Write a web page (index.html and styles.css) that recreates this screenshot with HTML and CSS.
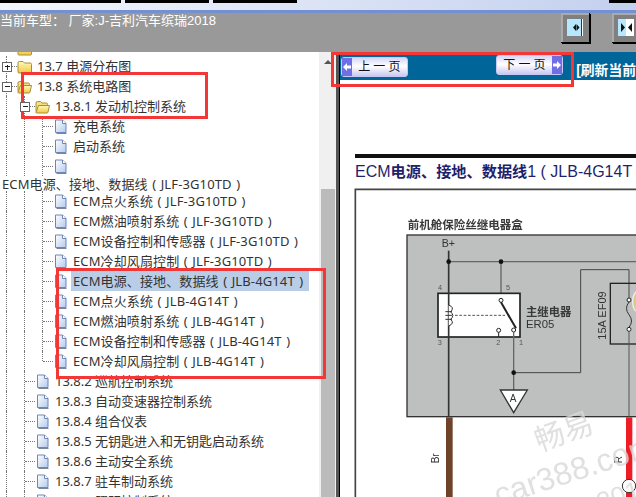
FILE: index.html
```html
<!DOCTYPE html>
<html lang="zh-CN">
<head>
    <meta charset="UTF-8">
    <title>电路图</title>
    <link rel="stylesheet" href="styles.css">
</head>
<body>
    <svg width="0" height="0" class="defs">
        <defs>
            <linearGradient id="foldergrad" x1="0" y1="0" x2="0" y2="1">
                <stop offset="0" stop-color="#fff8c0"/>
                <stop offset="1" stop-color="#f3c93c"/>
            </linearGradient>
            <linearGradient id="docgrad" x1="0" y1="0" x2="1" y2="1">
                <stop offset="0" stop-color="#ffffff"/>
                <stop offset="1" stop-color="#b4caec"/>
            </linearGradient>
            <symbol id="folder" viewBox="0 0 15 14">
                <path d="M1 12.5V3.5Q1 2 2.5 2H6L7.5 3.5H13Q14.5 3.5 14.5 5V12.5Q14.5 13.5 13.5 13.5H2Q1 13.5 1 12.5Z" fill="url(#foldergrad)" stroke="#a88c3c"/>
            </symbol>
            <symbol id="folderopen" viewBox="0 0 15 14">
                <path d="M1 12V3.5Q1 2 2.5 2H5.5L7 3.5H11.5Q12.5 3.5 12.5 5V6" fill="#f6e07a" stroke="#a88c3c"/>
                <path d="M1 13L3.5 6H14.5L13 12.5Q12.8 13.5 12 13.5H2Q1 13.5 1 13Z" fill="url(#foldergrad)" stroke="#a88c3c"/>
            </symbol>
            <symbol id="doc" viewBox="0 0 13 15">
                <path d="M1.5 1H8.5L12 4.5V13.5H1.5Z" fill="url(#docgrad)" stroke="#6f86b5"/>
                <path d="M8.5 1V4.5H12" fill="#fff" stroke="#6f86b5"/>
                <path d="M2.5 14.5H12.5" stroke="#7a84a3"/>
            </symbol>
        </defs>
    </svg>

    <div class="page">
        <div class="topstrip">
            <div class="tabs">
                <span class="tab tab1"></span>
                <span class="tab tab2"></span>
                <span class="tab tab2"></span>
            </div>
            <span class="tab tabend"></span>
        </div>

        <div class="band">
            <div class="cartitle">当前车型： 厂家:J-吉利汽车缤瑞2018</div>
            <div class="framebtns">
                <div class="framebtn">
                    <svg width="16" height="17" viewBox="0 0 16 17"><path d="M9 5L6 8.5L9 12Z M9.5 5L12.5 8.5L9.5 12Z" fill="#111"/><rect x="15" y="0" width="1" height="17" fill="#fff"/><rect x="14" y="0" width="1" height="17" fill="#333"/></svg>
                </div>
                <div class="framebtn">
                    <svg width="16" height="17" viewBox="0 0 16 17"><rect x="8" y="0" width="8" height="17" fill="#fff"/><path d="M3 4V13L7 8.5Z M14 4L10 8.5L14 13Z" fill="#111"/></svg>
                </div>
            </div>
        </div>

        <div class="main">
            <div class="tree">
                <div class="row toppart"><span class="elbow plain"></span><svg class="icon"><use href="#folder"/></svg></div>
                <div class="row"><span class="elbow"><i class="box plus"></i></span><svg class="icon"><use href="#folder"/></svg><span class="label">13.7 电源分布图</span></div>
                <div class="row"><span class="elbow"><i class="box"></i></span><svg class="icon"><use href="#folderopen"/></svg><span class="label">13.8 系统电路图</span></div>
                <div class="row"><span class="guide"></span><span class="elbow"><i class="box"></i></span><svg class="icon"><use href="#folderopen"/></svg><span class="label">13.8.1 发动机控制系统</span></div>
                <div class="row"><span class="guide"></span><span class="guide"></span><span class="elbow"></span><svg class="icon"><use href="#doc"/></svg><span class="label">充电系统</span></div>
                <div class="row"><span class="guide"></span><span class="guide"></span><span class="elbow"></span><svg class="icon"><use href="#doc"/></svg><span class="label">启动系统</span></div>
                <div class="row"><span class="guide"></span><span class="guide"></span><span class="elbow"></span><svg class="icon"><use href="#doc"/></svg></div>
                <div class="row flush"><span class="label ecm">ECM电源、接地、数据线 ( JLF-3G10TD )</span></div>
                <div class="row"><span class="guide"></span><span class="guide"></span><span class="elbow"></span><svg class="icon"><use href="#doc"/></svg><span class="label ecm">ECM点火系统 ( JLF-3G10TD )</span></div>
                <div class="row"><span class="guide"></span><span class="guide"></span><span class="elbow"></span><svg class="icon"><use href="#doc"/></svg><span class="label ecm">ECM燃油喷射系统 ( JLF-3G10TD )</span></div>
                <div class="row"><span class="guide"></span><span class="guide"></span><span class="elbow"></span><svg class="icon"><use href="#doc"/></svg><span class="label ecm">ECM设备控制和传感器 ( JLF-3G10TD )</span></div>
                <div class="row"><span class="guide"></span><span class="guide"></span><span class="elbow"></span><svg class="icon"><use href="#doc"/></svg><span class="label ecm">ECM冷却风扇控制 ( JLF-3G10TD )</span></div>
                <div class="row"><span class="guide"></span><span class="guide"></span><span class="elbow"></span><svg class="icon"><use href="#doc"/></svg><span class="label ecm selected">ECM电源、接地、数据线 ( JLB-4G14T )</span></div>
                <div class="row"><span class="guide"></span><span class="guide"></span><span class="elbow"></span><svg class="icon"><use href="#doc"/></svg><span class="label ecm">ECM点火系统 ( JLB-4G14T )</span></div>
                <div class="row"><span class="guide"></span><span class="guide"></span><span class="elbow"></span><svg class="icon"><use href="#doc"/></svg><span class="label ecm">ECM燃油喷射系统 ( JLB-4G14T )</span></div>
                <div class="row"><span class="guide"></span><span class="guide"></span><span class="elbow"></span><svg class="icon"><use href="#doc"/></svg><span class="label ecm">ECM设备控制和传感器 ( JLB-4G14T )</span></div>
                <div class="row"><span class="guide"></span><span class="guide"></span><span class="elbow last"></span><svg class="icon"><use href="#doc"/></svg><span class="label ecm">ECM冷却风扇控制 ( JLB-4G14T )</span></div>
                <div class="row"><span class="guide"></span><span class="elbow"></span><svg class="icon"><use href="#doc"/></svg><span class="label">13.8.2 巡航控制系统</span></div>
                <div class="row"><span class="guide"></span><span class="elbow"></span><svg class="icon"><use href="#doc"/></svg><span class="label">13.8.3 自动变速器控制系统</span></div>
                <div class="row"><span class="guide"></span><span class="elbow"></span><svg class="icon"><use href="#doc"/></svg><span class="label">13.8.4 组合仪表</span></div>
                <div class="row"><span class="guide"></span><span class="elbow"></span><svg class="icon"><use href="#doc"/></svg><span class="label">13.8.5 无钥匙进入和无钥匙启动系统</span></div>
                <div class="row"><span class="guide"></span><span class="elbow"></span><svg class="icon"><use href="#doc"/></svg><span class="label">13.8.6 主动安全系统</span></div>
                <div class="row"><span class="guide"></span><span class="elbow"></span><svg class="icon"><use href="#doc"/></svg><span class="label">13.8.7 驻车制动系统</span></div>
                <div class="row"><span class="guide"></span><span class="elbow"></span><svg class="icon"><use href="#doc"/></svg><span class="label">13.8.8 照明控制系统</span></div>
            </div>

            <div class="scrollbar">
                <span class="arrowup"></span>
                <div class="thumb"></div>
            </div>
            <div class="splitter"></div>

            <div class="pane">
                <div class="pager">
                    <div class="pagebtn prev">
                        <span class="pagearrow"><svg width="10" height="10" viewBox="0 0 10 10"><path d="M1 5L5 1V3.5H9V6.5H5V9Z" fill="#fff"/></svg></span>
                        <span class="pagetext">上 一 页</span>
                    </div>
                    <div class="pagebtn next">
                        <span class="pagetext">下 一 页</span>
                        <span class="pagearrow"><svg width="10" height="10" viewBox="0 0 10 10"><path d="M9 5L5 1V3.5H1V6.5H5V9Z" fill="#fff"/></svg></span>
                    </div>
                    <span class="refresh">[刷新当前</span>
                </div>
                <div class="docbody">
                    <div class="docrule"></div>
                    <h3 class="doctitle">ECM<b>电源、接地、数据线</b>1 ( JLB-4G14T )</h3>
                    <svg class="diagram" viewBox="0 0 888 921" width="296" height="307">
                        <path d="M46 921V-2H888" fill="none" stroke="#444" stroke-width="5"/>
                        <text x="203" y="118" class="cjkbold" font-size="34.5">前机舱保险丝继电器盒</text>
                        <rect x="201" y="135" width="700" height="545" fill="#bec0c0" stroke="#333" stroke-width="4"/>
                        <text x="305" y="172" font-size="32" fill="#333">B+</text>

                        <path d="M326 215H888M483 215V326" fill="none" stroke="#666" stroke-width="4"/>
                        <rect x="294" y="310" width="246" height="131" fill="#fff" stroke="#222" stroke-width="5"/>
                        <path d="M326 182V680" fill="none" stroke="#333" stroke-width="5"/>
                        <circle cx="326" cy="215" r="7" fill="#111"/>
                        <circle cx="483" cy="215" r="7" fill="#111"/>

                        <path d="M326 345Q345 352 332 366Q345 376 332 388Q345 400 326 408" fill="#fff" stroke="#333" stroke-width="3"/>
                        <path d="M316 365H336M316 376H336M316 388H336" stroke="#333" stroke-width="3"/>
                        <path d="M345 376H495" stroke="#555" stroke-width="3" stroke-dasharray="8 5"/>
                        <path d="M483 337L528 415" stroke="#222" stroke-width="6"/>
                        <circle cx="483" cy="331" r="6" fill="#fff" stroke="#222" stroke-width="3"/>
                        <circle cx="521" cy="420" r="6" fill="#fff" stroke="#222" stroke-width="3"/>
                        <circle cx="476" cy="421" r="6" fill="#fff" stroke="#222" stroke-width="3"/>
                        <path d="M476 427V441" stroke="#222" stroke-width="3"/>
                        <text x="294" y="299" font-size="22" fill="#555">4</text>
                        <text x="498" y="299" font-size="22" fill="#555">5</text>
                        <text x="293" y="466" font-size="22" fill="#555">3</text>
                        <text x="469" y="466" font-size="22" fill="#555">2</text>
                        <text x="537" y="466" font-size="22" fill="#555">1</text>
                        <text x="558" y="377" class="cjkbold" font-size="34">主继电器</text>
                        <text x="558" y="415" font-size="34" fill="#333">ER05</text>

                        <path d="M521 426V600" stroke="#666" stroke-width="4"/>
                        <path d="M521 548H722V239H867V325" fill="none" stroke="#444" stroke-width="3"/>
                        <circle cx="521" cy="548" r="7" fill="#111"/>
                        <path d="M481 600H562L521 668Z" fill="#fff" stroke="#333" stroke-width="4"/>
                        <text x="509" y="636" font-size="30" fill="#333">A</text>

                        <text transform="translate(797 449) rotate(-90)" font-size="33" fill="#333">15A EF09</text>
                        <rect x="811" y="280" width="100" height="182" fill="none" stroke="#222" stroke-width="4"/>
                        <ellipse cx="892" cy="335" rx="14" ry="30" fill="#d9c98a" stroke="#eee" stroke-width="4"/>
                        <path d="M867 336Q852 355 867 374Q882 393 867 412" fill="none" stroke="#333" stroke-width="3"/>
                        <circle cx="867" cy="330" r="6" fill="#fff" stroke="#222" stroke-width="3"/>
                        <circle cx="867" cy="418" r="6" fill="#fff" stroke="#222" stroke-width="3"/>
                        <path d="M867 424V680" stroke="#555" stroke-width="3"/>

                        <rect x="318" y="682" width="20" height="239" fill="#6f432a"/>
                        <rect x="858" y="682" width="19" height="239" fill="#ee1c25"/>
                        <circle cx="867" cy="888" r="20" fill="#fff" stroke="#333" stroke-width="3"/>
                        <text transform="translate(297 820) rotate(-90)" font-size="30" fill="#333">Br</text>
                        <text transform="translate(846 820) rotate(-90)" font-size="30" fill="#333">R</text>

                        <text transform="translate(598 785) rotate(-20)" class="mark" font-size="90">畅易</text>
                        <text transform="translate(475 948) rotate(-18)" class="mark" font-size="96">car388.com</text>
                        <text transform="translate(780 965) rotate(-18)" class="mark" font-size="80">2016</text>
                    </svg>
                </div>
            </div>
        </div>

        <span class="redbox box1"></span>
        <span class="redbox box2"></span>
        <span class="redbox box3"></span>
    </div>
</body>
</html>
```

FILE: styles.css
```css
html, body {
    margin: 0;
    height: 100%;
    overflow: hidden;
    background-color: #fff;
}

.defs {
    position: absolute;
}

.page {
    position: relative;
    width: 636px;
    height: 497px;
    overflow: hidden;
    font-family: "Noto Sans", "Noto Sans CJK SC", sans-serif;
    font-size: 13px;
    color: #333;
}

/* top strip */
.topstrip {
    display: flex;
    justify-content: space-between;
    height: 10px;
    background: linear-gradient(to right, #f4f6fd, #c3d0ee);
    border-bottom: 3px solid #7391d2;
}

.tabs {
    display: flex;
    gap: 4px;
}

.tab {
    display: block;
    height: 3px;
    background-color: #000;
}

.tab1 {
    width: 121px;
}

.tab2 {
    width: 84px;
}

.tabend {
    width: 27px;
}

/* gray band */
.band {
    display: flex;
    justify-content: space-between;
    height: 39px;
    background-color: #999;
    overflow: hidden;
}

.cartitle {
    line-height: 15px;
    font-family: "Liberation Sans", "Noto Sans CJK SC", sans-serif;
    color: #fff;
}

.framebtns {
    display: flex;
    gap: 22px;
    flex-shrink: 0;
    margin-right: -5px;
}

.framebtn {
    width: 16px;
    height: 17px;
    padding: 6px;
    background-color: #808080;
    border-right: 1px solid #000;
    border-bottom: 1px solid #000;
    box-shadow: 1px 1px 0 #000, inset 2px 2px 0 #aaa;
}

.framebtn svg {
    display: block;
    background-color: #b5e8ff;
}

/* main area */
.main {
    display: flex;
    height: 445px;
}

.tree {
    width: 319px;
    overflow: hidden;
    flex-shrink: 0;
}

.row {
    display: flex;
    align-items: center;
    height: 20px;
    padding-left: 6px;
    white-space: nowrap;
}

.toppart {
    height: 4px;
    align-items: flex-end;
    overflow: hidden;
}

.flush {
    height: 15px;
    padding-left: 2px;
}

.guide {
    align-self: stretch;
    width: 17px;
    border-left: 1px dotted #777;
}

.elbow {
    position: relative;
    align-self: stretch;
    width: 10px;
    border-left: 1px dotted #777;
}

.elbow.plain {
    border-left: 0;
    width: 11px;
}

.elbow.last {
    height: 10px;
}

.elbow::after {
    content: "";
    position: absolute;
    left: 0;
    right: 0;
    top: 10px;
    border-top: 1px dotted #777;
}

.elbow.plain::after {
    display: none;
}

.box {
    position: absolute;
    z-index: 1;
    left: -5px;
    top: 6px;
    width: 8px;
    height: 8px;
    background: #fff linear-gradient(to right, transparent 2px, #222 2px, #222 7px, transparent 7px) no-repeat 0 3px / 100% 1px;
    border: 1px solid #666;
}

.box.plus::after {
    content: "";
    position: absolute;
    left: 4px;
    top: 2px;
    width: 1px;
    height: 5px;
    background-color: #222;
}

.icon {
    width: 15px;
    height: 15px;
    margin-right: 5px;
    flex-shrink: 0;
}

.label {
    line-height: 20px;
}

.ecm {
    letter-spacing: 0.12px;
    word-spacing: 1px;
}

.selected {
    margin-left: -2px;
    padding: 0 6px 0 2px;
    background-color: #b9cde6;
}

/* scrollbar and splitter */
.scrollbar {
    position: relative;
    width: 17px;
    flex-shrink: 0;
    background-color: #f0f0f0;
}

.arrowup {
    position: absolute;
    left: 5px;
    top: 8px;
    border-left: 4px solid transparent;
    border-right: 4px solid transparent;
    border-bottom: 4px solid #555;
}

.thumb {
    position: absolute;
    left: 2px;
    right: 1px;
    top: 137px;
    bottom: 0;
    background-color: #bbb;
}

.splitter {
    width: 4px;
    flex-shrink: 0;
    background-color: #555;
    border-right: 1px solid #000;
    box-sizing: border-box;
}

/* right pane */
.pane {
    flex: 1;
    min-width: 0;
    overflow: hidden;
    background-color: #fff;
}

.pager {
    display: flex;
    align-items: flex-start;
    height: 28px;
    padding-left: 1px;
    background-color: #006699;
    white-space: nowrap;
}

.pagebtn {
    display: flex;
    align-items: center;
    box-sizing: border-box;
    height: 20px;
    background: linear-gradient(to bottom, #d6d6f8, #ffffff 45%, #c9c9f2);
    border: 1px solid #c8c8f4;
    border-radius: 3px;
    color: #111;
    font-size: 12px;
}

.prev {
    width: 67px;
    margin-top: 5px;
}

.next {
    width: 68px;
    margin-top: 3px;
    margin-left: 88px;
}

.pagearrow {
    display: flex;
    align-items: center;
    justify-content: center;
    width: 10px;
    align-self: stretch;
    background-color: #6e6ee6;
}

.pagetext {
    flex: 1;
    text-align: center;
    line-height: 18px;
}

.refresh {
    margin-left: 13px;
    margin-top: 10px;
    color: #fff;
    font-size: 13.8px;
    font-weight: bold;
    font-family: "Liberation Sans", "Noto Sans CJK SC", sans-serif;
    line-height: 18px;
}

.docbody {
    padding-top: 74px;
}

.docrule {
    height: 4px;
    margin-left: 15px;
    background-color: #111;
}

.doctitle {
    margin: 0 0 0 15px;
    height: 32px;
    line-height: 28px;
    font-family: "Liberation Sans", "Noto Sans CJK SC", sans-serif;
    font-size: 16px;
    font-weight: normal;
    color: #1f1f6e;
    white-space: nowrap;
    overflow: hidden;
}

.doctitle b {
    font-size: 15.2px;
}

.diagram {
    display: block;
    overflow: visible;
    font-family: "Liberation Sans", "Noto Sans CJK SC", sans-serif;
    filter: blur(0.35px);
}

.cjkbold {
    font-weight: bold;
    fill: #3a3a3a;
}

.mark {
    fill: #d8d8d8;
    fill-opacity: 0.8;
}

/* red annotation boxes */
.redbox {
    position: absolute;
    box-sizing: border-box;
    border: 3px solid #f33636;
}

.box1 {
    left: 21px;
    top: 72px;
    width: 187px;
    height: 47px;
}

.box2 {
    left: 56px;
    top: 268px;
    width: 270px;
    height: 111px;
}

.box3 {
    left: 331px;
    top: 52px;
    width: 243px;
    height: 35px;
}
```
